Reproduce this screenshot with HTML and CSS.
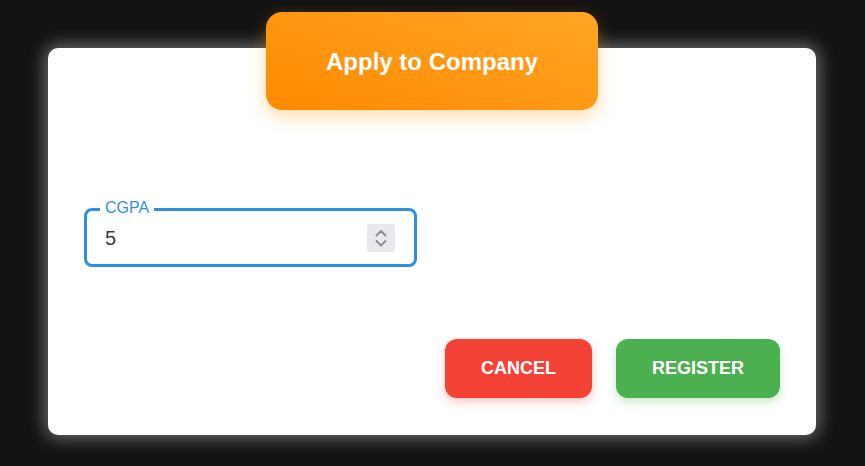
FILE: index.html
```html
<!DOCTYPE html>
<html>
<head>
<meta charset="utf-8">
<link rel="stylesheet" href="styles.css">
</head>
<body>
<div class="dialog">
  <div class="header">Apply to Company</div>
  <div class="content">
    <div class="field">
      <span class="label">CGPA</span>
      <span class="value">5</span>
      <span class="spinner">
        <svg width="14" height="24" viewBox="0 0 14 24"><path d="M2.5 9.5 L7 5 L11.5 9.5" fill="none" stroke="#8a8a8a" stroke-width="1.8" stroke-linecap="round" stroke-linejoin="round"/><path d="M2.5 15 L7 19.5 L11.5 15" fill="none" stroke="#8a8a8a" stroke-width="1.8" stroke-linecap="round" stroke-linejoin="round"/></svg>
      </span>
    </div>
  </div>
  <div class="actions">
    <button class="btn cancel">CANCEL</button>
    <button class="btn register">REGISTER</button>
  </div>
</div>
</body>
</html>
```
FILE: styles.css
```css
html, body {
  margin: 0;
  padding: 0;
  background: #121212;
  width: 865px;
  height: 466px;
  overflow: hidden;
  font-family: "Liberation Sans", Arial, sans-serif;
}
body {
  padding: 48px 0 0 48px;
  box-sizing: border-box;
}
.dialog {
  width: 768px;
  height: 387px;
  background: #fff;
  border-radius: 10px;
  box-shadow: 0 0 18px 3px rgba(255, 255, 255, 0.4);
  display: flex;
  flex-direction: column;
  box-sizing: border-box;
  padding: 0 36px 37px 36px;
}
.header {
  width: 332px;
  height: 98px;
  margin: -36px auto 0;
  border-radius: 16px;
  background: linear-gradient(20deg, #ff8a00 0%, #ffa526 100%);
  box-shadow: 0 6px 18px rgba(255, 152, 0, 0.35);
  color: #fff;
  font-weight: bold;
  font-size: 24px;
  display: flex;
  align-items: center;
  justify-content: center;
  flex-shrink: 0;
  padding-top: 2px;
  box-sizing: border-box;
}
.content {
  flex: 1;
  padding-top: 98px;
}
.field {
  position: relative;
  width: 333px;
  height: 59px;
  box-sizing: border-box;
  border: 3px solid #2e90e0;
  border-radius: 8px;
  display: flex;
  align-items: center;
  padding: 0 19px 0 18px;
}
.label {
  position: absolute;
  top: -13px;
  left: 13px;
  padding: 0 5px;
  background: #fff;
  color: #2e90e0;
  font-size: 16px;
  line-height: 19px;
}
.value {
  flex: 1;
  font-size: 20px;
  color: #3a3a3a;
  padding-top: 2px;
}
.spinner {
  width: 28px;
  height: 28px;
  background: #e9e9ed;
  display: flex;
  align-items: center;
  justify-content: center;
  border-radius: 2px;
}
.actions {
  display: flex;
  justify-content: flex-end;
  gap: 24px;
}
.btn {
  height: 59px;
  border: none;
  border-radius: 12px;
  color: #fff;
  font-family: "Liberation Sans", Arial, sans-serif;
  font-weight: bold;
  font-size: 18px;
  padding: 0 36px;
}
.cancel {
  width: 147px;
  background: #f44336;
  box-shadow: 0 4px 10px rgba(244, 67, 54, 0.3);
}
.register {
  width: 164px;
  background: #4caf50;
  box-shadow: 0 4px 10px rgba(76, 175, 80, 0.3);
}
```
